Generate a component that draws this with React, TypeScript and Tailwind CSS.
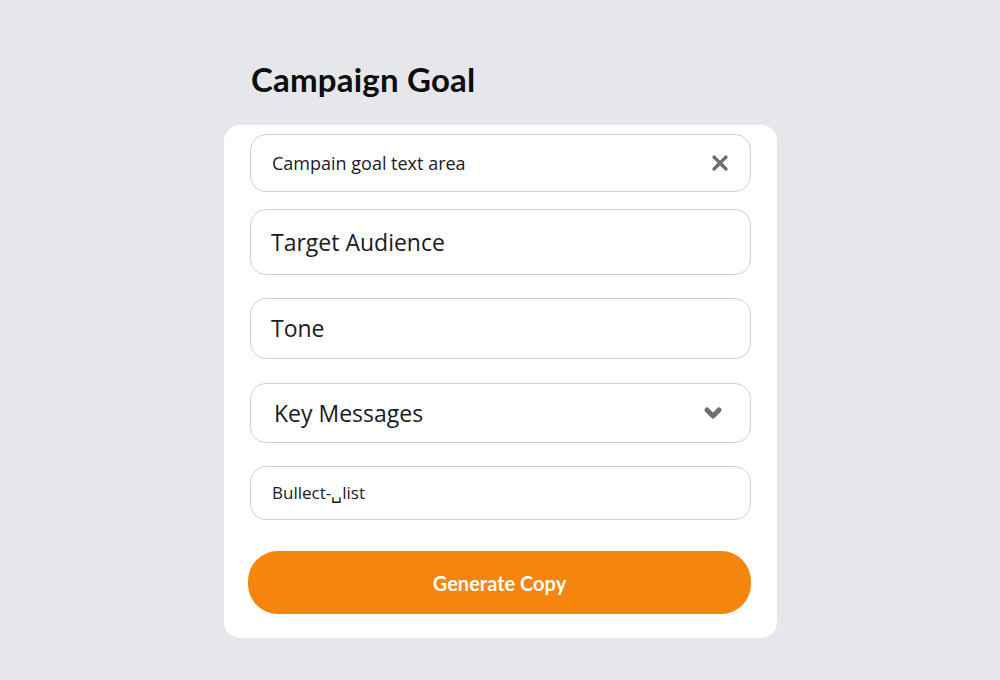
import React from 'react';

const App: React.FC = () => {
  return (
    <div className="min-h-screen w-full bg-[#e5e7ea] font-['Open_Sans',sans-serif] text-[#1a1a1c]">
      <div className="w-[553px] ml-[224px] pt-[59px]">
        {/* Title */}
        <h1 className="ml-[27px] text-[33px] leading-[40px] font-bold font-['Lato',sans-serif] tracking-[0.2px] text-[#0d0d0d]">
          Campaign Goal
        </h1>

        {/* Card */}
        <div className="mt-[26px] bg-white rounded-[16px] px-[26px] pt-[9px] pb-[24px]">
          <div className="h-[58px] rounded-[16px] border border-[#cfd1d4] flex items-center justify-between pl-[21px] pr-[21px]">
            <span className="text-[18px]">Campain goal text area</span>
            <svg width="18" height="18" viewBox="0 0 18 18" className="text-[#6b6e73]">
              <path d="M3 3 L15 15 M15 3 L3 15" stroke="currentColor" strokeWidth="3.2" strokeLinecap="round" />
            </svg>
          </div>

          <div className="mt-[17px] h-[66px] rounded-[16px] border border-[#cfd1d4] flex items-center pl-[20px]">
            <span className="text-[23px]">Target Audience</span>
          </div>

          <div className="mt-[23px] h-[61px] rounded-[16px] border border-[#cfd1d4] flex items-center pl-[20px]">
            <span className="text-[23px]">Tone</span>
          </div>

          <div className="mt-[24px] h-[60px] rounded-[16px] border border-[#cfd1d4] flex items-center justify-between pl-[23px] pr-[27px]">
            <span className="text-[23px]">Key Messages</span>
            <svg width="20" height="16" viewBox="0 0 20 16" className="text-[#6b6e73]">
              <path d="M4 5 L10 11 L16 5" fill="none" stroke="currentColor" strokeWidth="5" strokeLinecap="round" strokeLinejoin="round" />
            </svg>
          </div>

          <div className="mt-[23px] h-[54px] rounded-[16px] border border-[#cfd1d4] flex items-center pl-[21px]">
            <span className="text-[17px]">Bullect-␣list</span>
          </div>

          <button className="mt-[31px] -ml-[2px] w-[503px] h-[63px] rounded-[30px] bg-[#f5850c] text-white text-[20px] font-bold font-['Lato',sans-serif] flex items-center justify-center">
            Generate Copy
          </button>
        </div>
      </div>
    </div>
  );
};

export default App;
